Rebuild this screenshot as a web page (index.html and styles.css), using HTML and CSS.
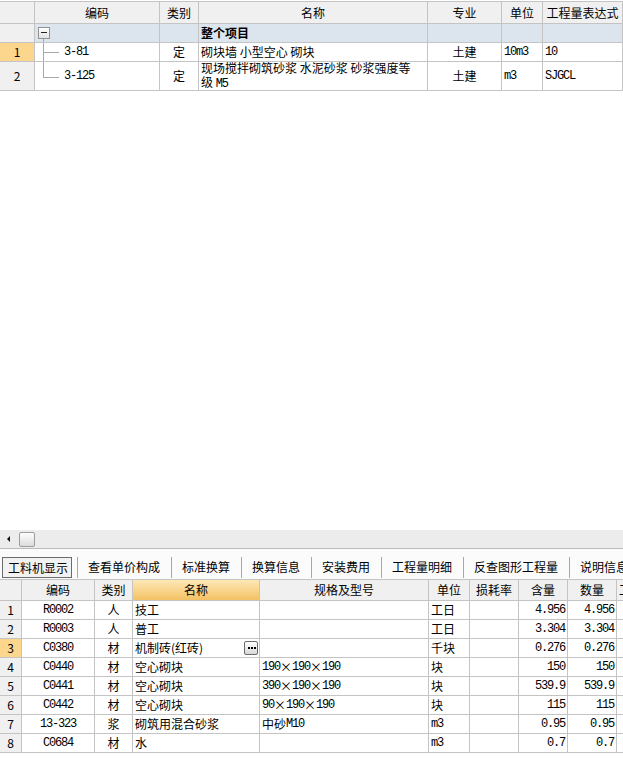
FILE: index.html
```html
<!DOCTYPE html>
<html lang="zh-CN">
  <head>
    <meta charset="UTF-8">
    <title>工料机显示</title>
    <link rel="stylesheet" href="styles.css">
  </head>
  <body>
    <div class="app">
      <!-- 上方：定额列表 -->
      <div class="top-pane">
        <div class="grid top-grid">
          <div class="row head">
            <div class="cell rh"></div>
            <div class="cell c">编码</div>
            <div class="cell c">类别</div>
            <div class="cell c">名称</div>
            <div class="cell c">专业</div>
            <div class="cell c">单位</div>
            <div class="cell c">工程量表达式</div>
          </div>
          <div class="row group">
            <div class="cell rh"></div>
            <div class="cell code root"><span class="tree-box"></span></div>
            <div class="cell"></div>
            <div class="cell"><b>整个项目</b></div>
            <div class="cell"></div>
            <div class="cell"></div>
            <div class="cell"></div>
          </div>
          <div class="row r1">
            <div class="cell rh c current">1</div>
            <div class="cell code mid"><span class="m">3-81</span></div>
            <div class="cell c">定</div>
            <div class="cell">砌块墙 小型空心 砌块</div>
            <div class="cell c">土建</div>
            <div class="cell"><span class="m">10m3</span></div>
            <div class="cell"><span class="m">10</span></div>
          </div>
          <div class="row r2">
            <div class="cell rh c">2</div>
            <div class="cell code last"><span class="m">3-125</span></div>
            <div class="cell c">定</div>
            <div class="cell wrap"><span>现场搅拌砌筑砂浆 水泥砂浆 砂浆强度等级 <span class="m">M5</span></span></div>
            <div class="cell c">土建</div>
            <div class="cell"><span class="m">m3</span></div>
            <div class="cell"><span class="m">SJGCL</span></div>
          </div>
        </div>
      </div>

      <div class="hscroll">
        <span class="arrow-left"></span>
        <span class="thumb"></span>
      </div>

      <div class="tabs">
        <div class="tab active">工料机显示</div>
        <div class="tab">查看单价构成</div>
        <div class="tab">标准换算</div>
        <div class="tab">换算信息</div>
        <div class="tab">安装费用</div>
        <div class="tab">工程量明细</div>
        <div class="tab">反查图形工程量</div>
        <div class="tab">说明信息</div>
      </div>

      <!-- 下方：工料机 -->
      <div class="grid bottom-grid">
        <div class="row head">
          <div class="cell rh"></div>
          <div class="cell c">编码</div>
          <div class="cell c">类别</div>
          <div class="cell c sorted">名称</div>
          <div class="cell c">规格及型号</div>
          <div class="cell c">单位</div>
          <div class="cell c">损耗率</div>
          <div class="cell c">含量</div>
          <div class="cell c">数量</div>
          <div class="cell">工程量</div>
        </div>
        <div class="row">
          <div class="cell rh c">1</div>
          <div class="cell c"><span class="m">R0002</span></div>
          <div class="cell c">人</div>
          <div class="cell">技工</div>
          <div class="cell"></div>
          <div class="cell">工日</div>
          <div class="cell"></div>
          <div class="cell r"><span class="m">4.956</span></div>
          <div class="cell r"><span class="m">4.956</span></div>
          <div class="cell"></div>
        </div>
        <div class="row">
          <div class="cell rh c">2</div>
          <div class="cell c"><span class="m">R0003</span></div>
          <div class="cell c">人</div>
          <div class="cell">普工</div>
          <div class="cell"></div>
          <div class="cell">工日</div>
          <div class="cell"></div>
          <div class="cell r"><span class="m">3.304</span></div>
          <div class="cell r"><span class="m">3.304</span></div>
          <div class="cell"></div>
        </div>
        <div class="row">
          <div class="cell rh c current">3</div>
          <div class="cell c"><span class="m">C0380</span></div>
          <div class="cell c">材</div>
          <div class="cell edit">机制砖(红砖)
            <span class="more">
              <svg width="12" height="12" viewBox="0 0 12 12"><rect x="3" y="5" width="2" height="2"/><rect x="6" y="5" width="2" height="2"/><rect x="9" y="5" width="2" height="2"/></svg>
            </span>
          </div>
          <div class="cell"></div>
          <div class="cell">千块</div>
          <div class="cell"></div>
          <div class="cell r"><span class="m">0.276</span></div>
          <div class="cell r"><span class="m">0.276</span></div>
          <div class="cell"></div>
        </div>
        <div class="row">
          <div class="cell rh c">4</div>
          <div class="cell c"><span class="m">C0440</span></div>
          <div class="cell c">材</div>
          <div class="cell">空心砌块</div>
          <div class="cell"><span class="m">190</span><i class="x">×</i><span class="m">190</span><i class="x">×</i><span class="m">190</span></div>
          <div class="cell">块</div>
          <div class="cell"></div>
          <div class="cell r"><span class="m">150</span></div>
          <div class="cell r"><span class="m">150</span></div>
          <div class="cell"></div>
        </div>
        <div class="row">
          <div class="cell rh c">5</div>
          <div class="cell c"><span class="m">C0441</span></div>
          <div class="cell c">材</div>
          <div class="cell">空心砌块</div>
          <div class="cell"><span class="m">390</span><i class="x">×</i><span class="m">190</span><i class="x">×</i><span class="m">190</span></div>
          <div class="cell">块</div>
          <div class="cell"></div>
          <div class="cell r"><span class="m">539.9</span></div>
          <div class="cell r"><span class="m">539.9</span></div>
          <div class="cell"></div>
        </div>
        <div class="row">
          <div class="cell rh c">6</div>
          <div class="cell c"><span class="m">C0442</span></div>
          <div class="cell c">材</div>
          <div class="cell">空心砌块</div>
          <div class="cell"><span class="m">90</span><i class="x">×</i><span class="m">190</span><i class="x">×</i><span class="m">190</span></div>
          <div class="cell">块</div>
          <div class="cell"></div>
          <div class="cell r"><span class="m">115</span></div>
          <div class="cell r"><span class="m">115</span></div>
          <div class="cell"></div>
        </div>
        <div class="row">
          <div class="cell rh c">7</div>
          <div class="cell c"><span class="m">13-323</span></div>
          <div class="cell c">浆</div>
          <div class="cell">砌筑用混合砂浆</div>
          <div class="cell">中砂<span class="m">M10</span></div>
          <div class="cell"><span class="m">m3</span></div>
          <div class="cell"></div>
          <div class="cell r"><span class="m">0.95</span></div>
          <div class="cell r"><span class="m">0.95</span></div>
          <div class="cell"></div>
        </div>
        <div class="row">
          <div class="cell rh c">8</div>
          <div class="cell c"><span class="m">C0684</span></div>
          <div class="cell c">材</div>
          <div class="cell">水</div>
          <div class="cell"></div>
          <div class="cell"><span class="m">m3</span></div>
          <div class="cell"></div>
          <div class="cell r"><span class="m">0.7</span></div>
          <div class="cell r"><span class="m">0.7</span></div>
          <div class="cell"></div>
        </div>
      </div>
    </div>
  </body>
</html>
```

FILE: styles.css
```css
* {
  margin: 0;
  padding: 0;
  box-sizing: border-box;
}
body {
  width: 623px;
  height: 758px;
  overflow: hidden;
  background: #fff;
  color: #000;
  font-family: "Noto Sans CJK SC", sans-serif;
  font-size: 12px;
}
.app {
  display: flex;
  flex-direction: column;
  height: 758px;
  overflow: hidden;
}

/* 表格通用 */
.grid {
  border-top: 1px solid #c4c4c4;
}
.row {
  display: grid;
}
.cell {
  display: flex;
  align-items: center;
  padding: 0 2px;
  line-height: 16px;
  white-space: nowrap;
  overflow: hidden;
  border-right: 1px solid #c4c4c4;
  border-bottom: 1px solid #c4c4c4;
}
.cell.c {
  justify-content: center;
}
.cell.r {
  justify-content: flex-end;
  padding-right: 2px;
}
.head .cell,
.cell.rh {
  background: #f0f0f0;
}
.cell.current {
  background: #fcd68c;
}
.head .cell.sorted {
  background: linear-gradient(#fde8b6, #f4c163);
}
.m {
  font-family: "Liberation Mono", monospace;
  letter-spacing: -1.2px;
}
.x {
  font-style: normal;
  display: inline-block;
  width: 12px;
  text-align: center;
}

/* 上方定额 */
.top-pane {
  height: 530px;
  padding-top: 1px;
}
.top-grid .row {
  grid-template-columns: 35px 125px 39px 229px 74px 41px 80px;
}
.top-grid .head {
  height: 22px;
}
.top-grid .group,
.top-grid .r1 {
  height: 19px;
}
.top-grid .r2 {
  height: 29px;
}
.top-grid .group .cell {
  background: #dce4ee;
}
.top-grid .group .cell.rh {
  background: #f0f0f0;
}
.cell.wrap {
  white-space: normal;
  line-height: 14px;
  padding-right: 10px;
}
.cell.code {
  position: relative;
  padding-left: 29px;
}
.cell.code.root {
  padding-left: 3px;
}
.tree-box {
  position: relative;
  width: 12px;
  height: 12px;
  border: 1px solid #939393;
  background: linear-gradient(#fff, #e2e2e2);
}
.tree-box::after {
  content: "";
  position: absolute;
  left: 2px;
  top: 4px;
  width: 6px;
  height: 1px;
  background: #222;
}
.cell.code.root::before,
.cell.code.mid::before,
.cell.code.last::before,
.cell.code.mid::after,
.cell.code.last::after {
  content: "";
  position: absolute;
  background: #a8a8a8;
}
.cell.code.root::before {
  left: 8px;
  top: 15px;
  bottom: -1px;
  width: 1px;
}
.cell.code.mid::before {
  left: 8px;
  top: 0;
  bottom: -1px;
  width: 1px;
}
.cell.code.last::before {
  left: 8px;
  top: 0;
  height: 15px;
  width: 1px;
}
.cell.code.mid::after,
.cell.code.last::after {
  left: 8px;
  width: 16px;
  height: 1px;
}
.cell.code.mid::after {
  top: 9px;
}
.cell.code.last::after {
  top: 15px;
}

/* 横向滚动条 */
.hscroll {
  height: 19px;
  display: flex;
  align-items: center;
  padding-left: 7px;
  background: #ececec;
  border-bottom: 1px solid #bcbcbc;
}
.arrow-left {
  width: 0;
  height: 0;
  border-top: 3px solid transparent;
  border-bottom: 3px solid transparent;
  border-right: 3px solid #111;
}
.thumb {
  margin-left: 9px;
  width: 16px;
  height: 15px;
  border: 1px solid #9d9d9d;
  border-radius: 2px;
  background: linear-gradient(#fdfdfd, #dcdcdc);
}

/* 页签 */
.tabs {
  height: 30px;
  display: flex;
  align-items: flex-end;
  padding: 0 0 1px 2px;
  background: #fbfbfb;
  white-space: nowrap;
}
.tab {
  flex: none;
  height: 21px;
  line-height: 19px;
  padding: 0 11px 0 10px;
  border-left: 1px solid #a8a8a8;
}
.tab.active {
  border: 1px solid #6b6b6b;
  padding: 0 3px 0 5px;
  margin-right: 5px;
  background: #f2f2f2;
}

/* 下方工料机 */
.bottom-grid .row {
  grid-template-columns: 22px 73px 38px 127px 169px 41px 49px 49px 49px 70px;
  height: 19px;
}
.bottom-grid .head {
  height: 21px;
}
.cell.edit {
  padding-right: 1px;
}
.more {
  margin-left: auto;
  width: 14px;
  height: 14px;
  border: 1px solid #6a6a6a;
  border-radius: 2px;
  background: linear-gradient(#ffffff, #d8d8d8);
  display: flex;
  align-items: center;
  justify-content: center;
}
```
